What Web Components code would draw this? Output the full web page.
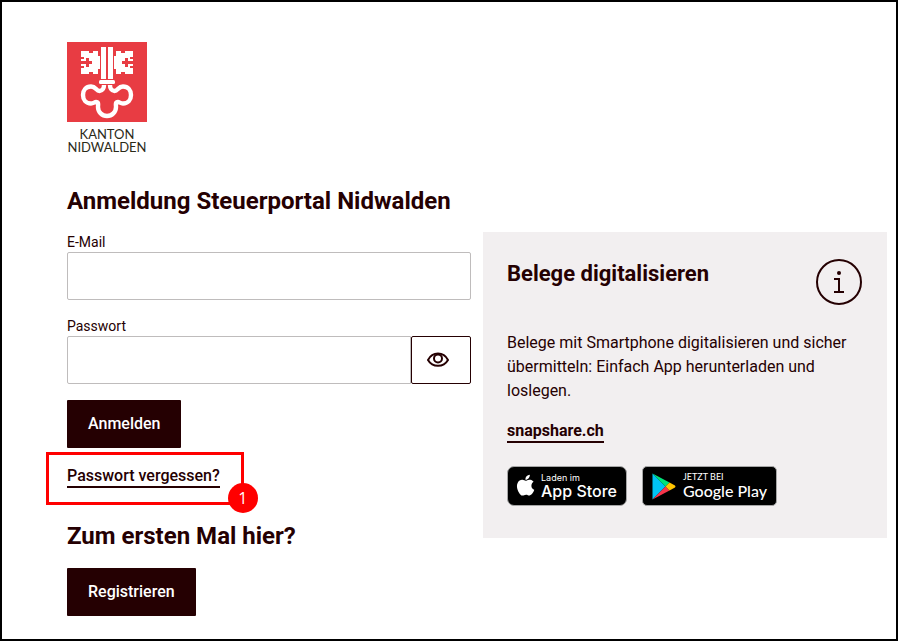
<!DOCTYPE html>
<html lang="de">
<head>
<meta charset="utf-8">
<title>Steuerportal Nidwalden</title>
<style>
  body { margin: 0; background: #fff; color: #250002; font-family: Roboto, "Liberation Sans", sans-serif; font-size: 16px; line-height: 24px; }
</style>
</head>
<body>
<login-page></login-page>
<script>
function define(name, html) {
  const template = document.createElement('template');
  template.innerHTML = '<style>*{box-sizing:border-box}</style>' + html;
  customElements.define(name, class extends HTMLElement {
    constructor() {
      super();
      this.attachShadow({ mode: 'open' }).append(template.content.cloneNode(true));
    }
  });
}

define('canton-logo', `
<style>
  :host { display: flex; flex-direction: column; align-items: center; width: 80px; color: #2b2a18; font: 13px/13px Lato, sans-serif; text-align: center; }
  svg { display: block; }
  .name { margin-top: 6px; }
  .name span { display: block; }
</style>
<svg width="80" height="80" viewBox="0 0 80 80" role="img" aria-label="Wappen">
  <rect width="80" height="80" fill="#e83c43"/>
  <g fill="#fff">
    <path d="M34 5h5v32h-5zM41 5h5v32h-5z"/>
    <rect x="32" y="38" width="16" height="4" rx="1.5"/>
    <path d="M14 9h8v2h4V9h5v5h2v13h-2v5h-5v-2h-4v2h-8v-6h3v-2h-3v-2h5v3h3v-3h3v-3h-3v-3h-3v3h-5v-2h3v-2h-3z"/>
    <path transform="translate(80 0) scale(-1 1)" d="M14 9h8v2h4V9h5v5h2v13h-2v5h-5v-2h-4v2h-8v-6h3v-2h-3v-2h5v3h3v-3h3v-3h-3v-3h-3v3h-5v-2h3v-2h-3z"/>
  </g>
  <path fill="none" stroke="#fff" stroke-width="4.4" stroke-linejoin="round" d="M37 43C37 46 35.500 49 32.500 49C29 49 29 44.500 24 44.500C19 44.500 16 48 16 53C16 58 19 61.500 24 61.500C26.500 61.500 27.500 60 29 60C32 60 31 63 31 65C31 70 35 74 40 74C45 74 49 70 49 65C49 63 48 60 51 60C52.500 60 53.500 61.500 56 61.500C61 61.500 64 58 64 53C64 48 61 44.500 56 44.500C51 44.500 51 49 47.500 49C44.500 49 43 46 43 43"/>
</svg>
<div class="name"><span>KANTON</span><span>NIDWALDEN</span></div>
`);

define('section-title', `
<style>
  :host { display: block; }
  h2 { margin: 0; font-size: 24px; line-height: 32px; font-weight: 700; }
  :host([compact]) h2 { font-size: 22px; }
</style>
<h2><slot></slot></h2>
`);

define('text-link', `
<style>
  :host { display: block; }
  a { display: block; width: fit-content; color: inherit; font-weight: 500; line-height: 24px; text-decoration: none; box-shadow: inset 0 -2px currentColor; }
  :host([strong]) a { font-weight: 700; }
</style>
<a href="#"><slot></slot></a>
`);

define('primary-button', `
<style>
  :host { display: block; }
  button { display: block; height: 48px; padding: 0 21px; border: 0; border-radius: 1px; background: #250002; color: #fff; font: 500 16px/24px Roboto, sans-serif; }
</style>
<button type="button"><slot></slot></button>
`);

define('email-field', `
<style>
  :host { display: block; }
  label { display: block; font-size: 14px; line-height: 20px; }
  input { display: block; width: 100%; height: 48px; padding: 0 12px; border: 1px solid #bfbcbc; border-radius: 2px; background: #fff; font: inherit; color: inherit; }
</style>
<label for="email">E-Mail</label>
<input id="email" type="email">
`);

define('password-field', `
<style>
  :host { display: block; }
  label { display: block; font-size: 14px; line-height: 20px; }
  .row { display: flex; height: 48px; }
  input { flex: 1; min-width: 0; padding: 0 12px; border: 1px solid #bfbcbc; border-radius: 2px 0 0 2px; background: #fff; font: inherit; color: inherit; }
  button { display: flex; align-items: center; width: 60px; padding: 0 15px; border: 1px solid #250002; border-radius: 2px; background: #fff; color: #250002; }
</style>
<label for="password">Passwort</label>
<div class="row">
  <input id="password" type="password">
  <button type="button" aria-label="Passwort anzeigen">
    <svg width="22" height="16" viewBox="0 0 22 16" fill="none" stroke="currentColor" stroke-width="2" stroke-linejoin="round"><path d="M1 8C5.500-.6 16.500-.6 21 8C16.500 15.800 5.500 15.800 1 8Z"/><circle cx="11" cy="6.500" r="4"/></svg>
  </button>
</div>
`);

define('callout-box', `
<style>
  :host { display: block; position: relative; }
  .frame { position: absolute; inset: -12px -24px -17px -21px; border: 3px solid #f00; pointer-events: none; }
  .number { position: absolute; right: -17px; bottom: -11px; width: 30px; height: 30px; border-radius: 50%; background: #f00; color: #fff; font: 16px/30px "Open Sans", sans-serif; text-align: center; }
</style>
<slot></slot>
<div class="frame"><span class="number">1</span></div>
`);

define('app-store-badge', `
<style>
  :host { display: block; }
  a { display: flex; align-items: center; gap: 6px; width: 120px; height: 40px; padding-left: 8px; border: 1px solid #a6a6a6; border-radius: 7px; background: #000; color: #fff; text-decoration: none; font-family: Inter, sans-serif; white-space: nowrap; }
  .small { display: block; font-size: 9px; line-height: 10px; }
  .big { display: block; font-size: 16px; line-height: 16px; font-weight: 500; }
</style>
<a href="#">
  <svg width="19" height="24" viewBox="0 0 19 24" fill="#fff"><path d="M15.300 11.800c0-2 1.600-3 1.700-3.100-1-1.400-2.400-1.600-3-1.600-1.300-.1-2.500.8-3.100.8s-1.600-.8-2.700-.7c-1.400 0-2.600.8-3.300 2-1.500 2.400-.4 6.100 1 8.100.7 1 1.500 2.100 2.600 2 1 0 1.400-.7 2.700-.7s1.600.7 2.700.6c1.100 0 1.800-1 2.500-2 .8-1.100 1.100-2.200 1.100-2.300 0 0-2.200-.8-2.200-3.100zM13.200 5.900c.6-.7 1-1.700.9-2.700-.9 0-1.900.6-2.500 1.300-.5.600-1 1.600-.9 2.600 1 .1 1.900-.5 2.500-1.200z" transform="translate(-4.500 -3.500) scale(1.300)"/></svg>
  <span><span class="small">Laden im</span><span class="big">App Store</span></span>
</a>
`);

define('google-play-badge', `
<style>
  :host { display: block; }
  a { display: flex; align-items: center; gap: 7px; width: 135px; height: 40px; padding-left: 9px; border: 1px solid #a6a6a6; border-radius: 5px; background: #000; color: #fff; text-decoration: none; white-space: nowrap; }
  .small { display: block; font: 9px/10px Lato, sans-serif; }
  .big { display: block; font: 500 16px/18px Lato, sans-serif; }
</style>
<a href="#">
  <svg width="24" height="27" viewBox="0 0 24 27"><path fill="#00c3f5" d="M.5.500v26L13.500 13.500z"/><path fill="#00e37a" d="M.5.500 17.500 9.500 13.500 13.500z"/><path fill="#f6354b" d="M.5 26.500 17.500 17.500 13.500 13.500z"/><path fill="#ffc400" d="M17.500 9.500 23 12.500q1 1 0 2L17.500 17.500 13.500 13.500z"/></svg>
  <span><span class="small">JETZT BEI</span><span class="big">Google Play</span></span>
</a>
`);

define('info-card', `
<style>
  :host { display: block; padding: 26px 24px 32px; background: #f2eff0; }
  header { display: flex; justify-content: space-between; align-items: flex-start; margin-bottom: 25px; }
  svg { display: block; }
  p { margin: 0 0 16px; }
  .badges { display: flex; flex-wrap: wrap; gap: 15px; margin-top: 23px; }
</style>
<header>
  <section-title compact>Belege digitalisieren</section-title>
  <svg width="48" height="48" viewBox="0 0 48 48" fill="none" stroke="#250002" stroke-width="2" aria-hidden="true"><circle cx="24" cy="24" r="22"/><path d="M19 21h5v13M19 34h10"/><circle cx="24" cy="15" r="2" fill="#250002" stroke="none"/></svg>
</header>
<p>Belege mit Smartphone digitalisieren und sicher übermitteln: Einfach App herunterladen und loslegen.</p>
<text-link strong>snapshare.ch</text-link>
<div class="badges"><app-store-badge></app-store-badge><google-play-badge></google-play-badge></div>
`);

define('login-page', `
<style>
  :host { display: block; box-sizing: border-box; min-height: 100vh; padding: 40px 9px 23px 65px; border: 2px solid #000; }
  .top { margin: 31px 0 15px; }
  .columns { display: grid; grid-template-columns: 1fr 1fr; gap: 12px; align-items: start; }
  form { display: flex; flex-direction: column; align-items: flex-start; gap: 16px; }
  email-field, password-field { width: 100%; }
  .register { margin-top: 16px; }
</style>
<canton-logo></canton-logo>
<section-title class="top">Anmeldung Steuerportal Nidwalden</section-title>
<div class="columns">
  <form>
    <email-field></email-field>
    <password-field></password-field>
    <primary-button>Anmelden</primary-button>
    <callout-box><text-link>Passwort vergessen?</text-link></callout-box>
    <section-title class="register">Zum ersten Mal hier?</section-title>
    <primary-button>Registrieren</primary-button>
  </form>
  <info-card></info-card>
</div>
`);
</script>
</body>
</html>
